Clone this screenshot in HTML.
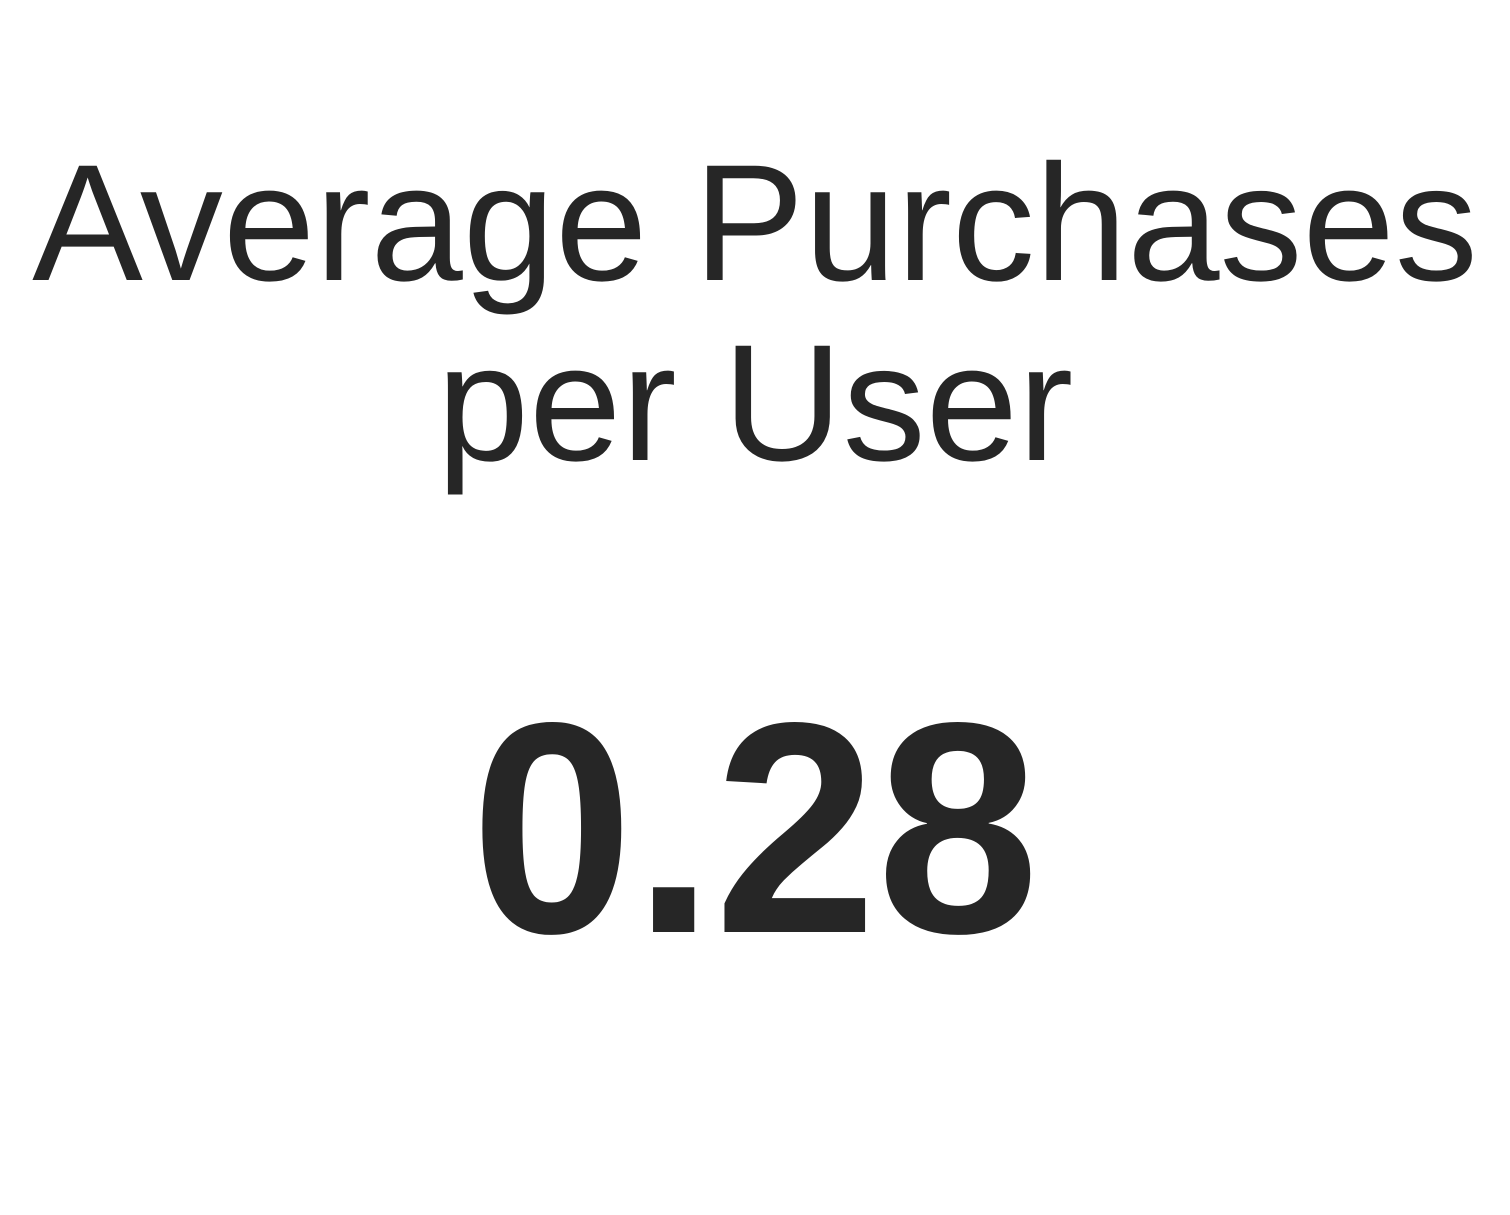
<!DOCTYPE html>
<html><head><meta charset="utf-8"><style>
html,body{margin:0;padding:0;background:#fff;width:1510px;height:1215px;overflow:hidden}
.t{position:absolute;left:0;width:1510px;text-align:center;font-family:"Liberation Sans",sans-serif;color:#262626;white-space:nowrap}
#a{top:134px;font-size:166px;line-height:180px}
#n{top:685px;font-size:292px;line-height:292px;font-weight:bold;transform:scaleY(1.03);transform-origin:50% 247px}
</style></head><body>
<div class="t" id="a">Average Purchases<br>per User</div>
<div class="t" id="n">0.28</div>
</body></html>
